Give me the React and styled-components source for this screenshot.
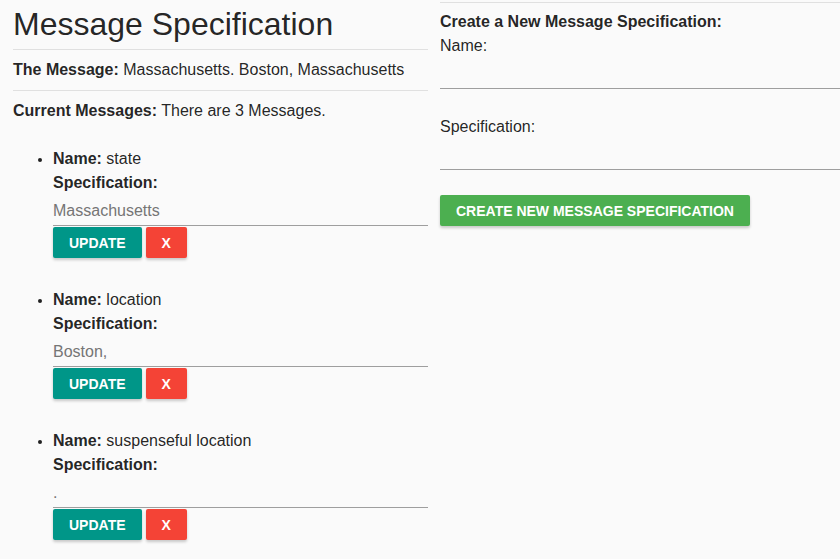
import React from "react";
import styled, { createGlobalStyle } from "styled-components";

const GlobalStyle = createGlobalStyle`
  html, body {
    margin: 0;
    padding: 0;
    background: #fafafa;
  }
  body {
    font-family: "Liberation Sans", Arial, sans-serif;
    font-size: 16px;
    color: rgba(0, 0, 0, 0.87);
  }
`;

const Page = styled.div`
  display: flex;
  gap: 12px;
  width: 840px;
  height: 559px;
  overflow: hidden;
`;

const LeftColumn = styled.div`
  width: 415px;
  padding-left: 13px;
  flex-shrink: 0;
`;

const RightColumn = styled.div`
  flex: 1;
  min-width: 0;
`;

const Title = styled.h1`
  margin: 0;
  padding-top: 5px;
  font-size: 32px;
  font-weight: 400;
  line-height: 38px;
  height: 44px;
`;

const Rule = styled.hr`
  margin: ${(p) => p.$top || "0"} 0 0;
  border: none;
  border-top: 1px solid #e0e0e0;
`;

const InfoLine = styled.p`
  margin: 0;
  line-height: 20px;
  padding: 10px 0;
`;

const MessageList = styled.ul`
  margin: 0;
  padding: 16px 0 0 40px;
  list-style: disc;
`;

const MessageItem = styled.li`
  height: 141px;
  line-height: 24px;
  &::marker {
    font-size: 14px;
  }
`;

const FieldInput = styled.input`
  display: block;
  box-sizing: border-box;
  width: 100%;
  height: ${(p) => p.$height || "31px"};
  margin: 0;
  padding: 1px 0 0;
  border: none;
  border-bottom: 1px solid #9e9e9e;
  background: transparent;
  font-family: inherit;
  font-size: 16px;
  color: #757575;
  outline: none;
`;

const ButtonRow = styled.div`
  display: flex;
  gap: 4px;
  margin-top: 1px;
`;

const ActionButton = styled.button`
  height: 31px;
  padding: 0 ${(p) => p.$padX || "16px"};
  margin-top: ${(p) => p.$top || "0"};
  border: none;
  border-radius: 2px;
  background: ${(p) => p.$bg};
  color: #fff;
  font-family: inherit;
  font-size: 14px;
  font-weight: 700;
  text-transform: uppercase;
  box-shadow: 0 2px 3px rgba(0, 0, 0, 0.2);
  cursor: pointer;
`;

const FormTitle = styled.div`
  font-weight: 700;
  line-height: 20px;
  padding-top: 9px;
`;

const FormLabel = styled.label`
  display: block;
  line-height: 20px;
  padding-top: ${(p) => p.$top || "0"};
`;

const messages = [
  { name: "state", spec: "Massachusetts" },
  { name: "location", spec: "Boston," },
  { name: "suspenseful location", spec: "." },
];

export default function App() {
  return (
    <>
      <GlobalStyle />
      <Page>
        <LeftColumn>
          <Title>Message Specification</Title>
          <Rule />
          <InfoLine>
            <b>The Message:</b> Massachusetts. Boston, Massachusetts
          </InfoLine>
          <Rule />
          <InfoLine>
            <b>Current Messages:</b> There are 3 Messages.
          </InfoLine>
          <MessageList>
            {messages.map((m) => (
              <MessageItem key={m.name}>
                <div>
                  <b>Name:</b> {m.name}
                </div>
                <div>
                  <b>Specification:</b>
                </div>
                <FieldInput defaultValue={m.spec} />
                <ButtonRow>
                  <ActionButton $bg="#009688">Update</ActionButton>
                  <ActionButton $bg="#f44336" $padX="16px">
                    X
                  </ActionButton>
                </ButtonRow>
              </MessageItem>
            ))}
          </MessageList>
        </LeftColumn>
        <RightColumn>
          <Rule $top="2px" />
          <FormTitle>Create a New Message Specification:</FormTitle>
          <FormLabel $top="4px">Name:</FormLabel>
          <FieldInput $height="33px" />
          <FormLabel $top="28px">Specification:</FormLabel>
          <FieldInput $height="33px" />
          <ActionButton $bg="#4caf50" $top="25px">
            Create new message specification
          </ActionButton>
        </RightColumn>
      </Page>
    </>
  );
}
